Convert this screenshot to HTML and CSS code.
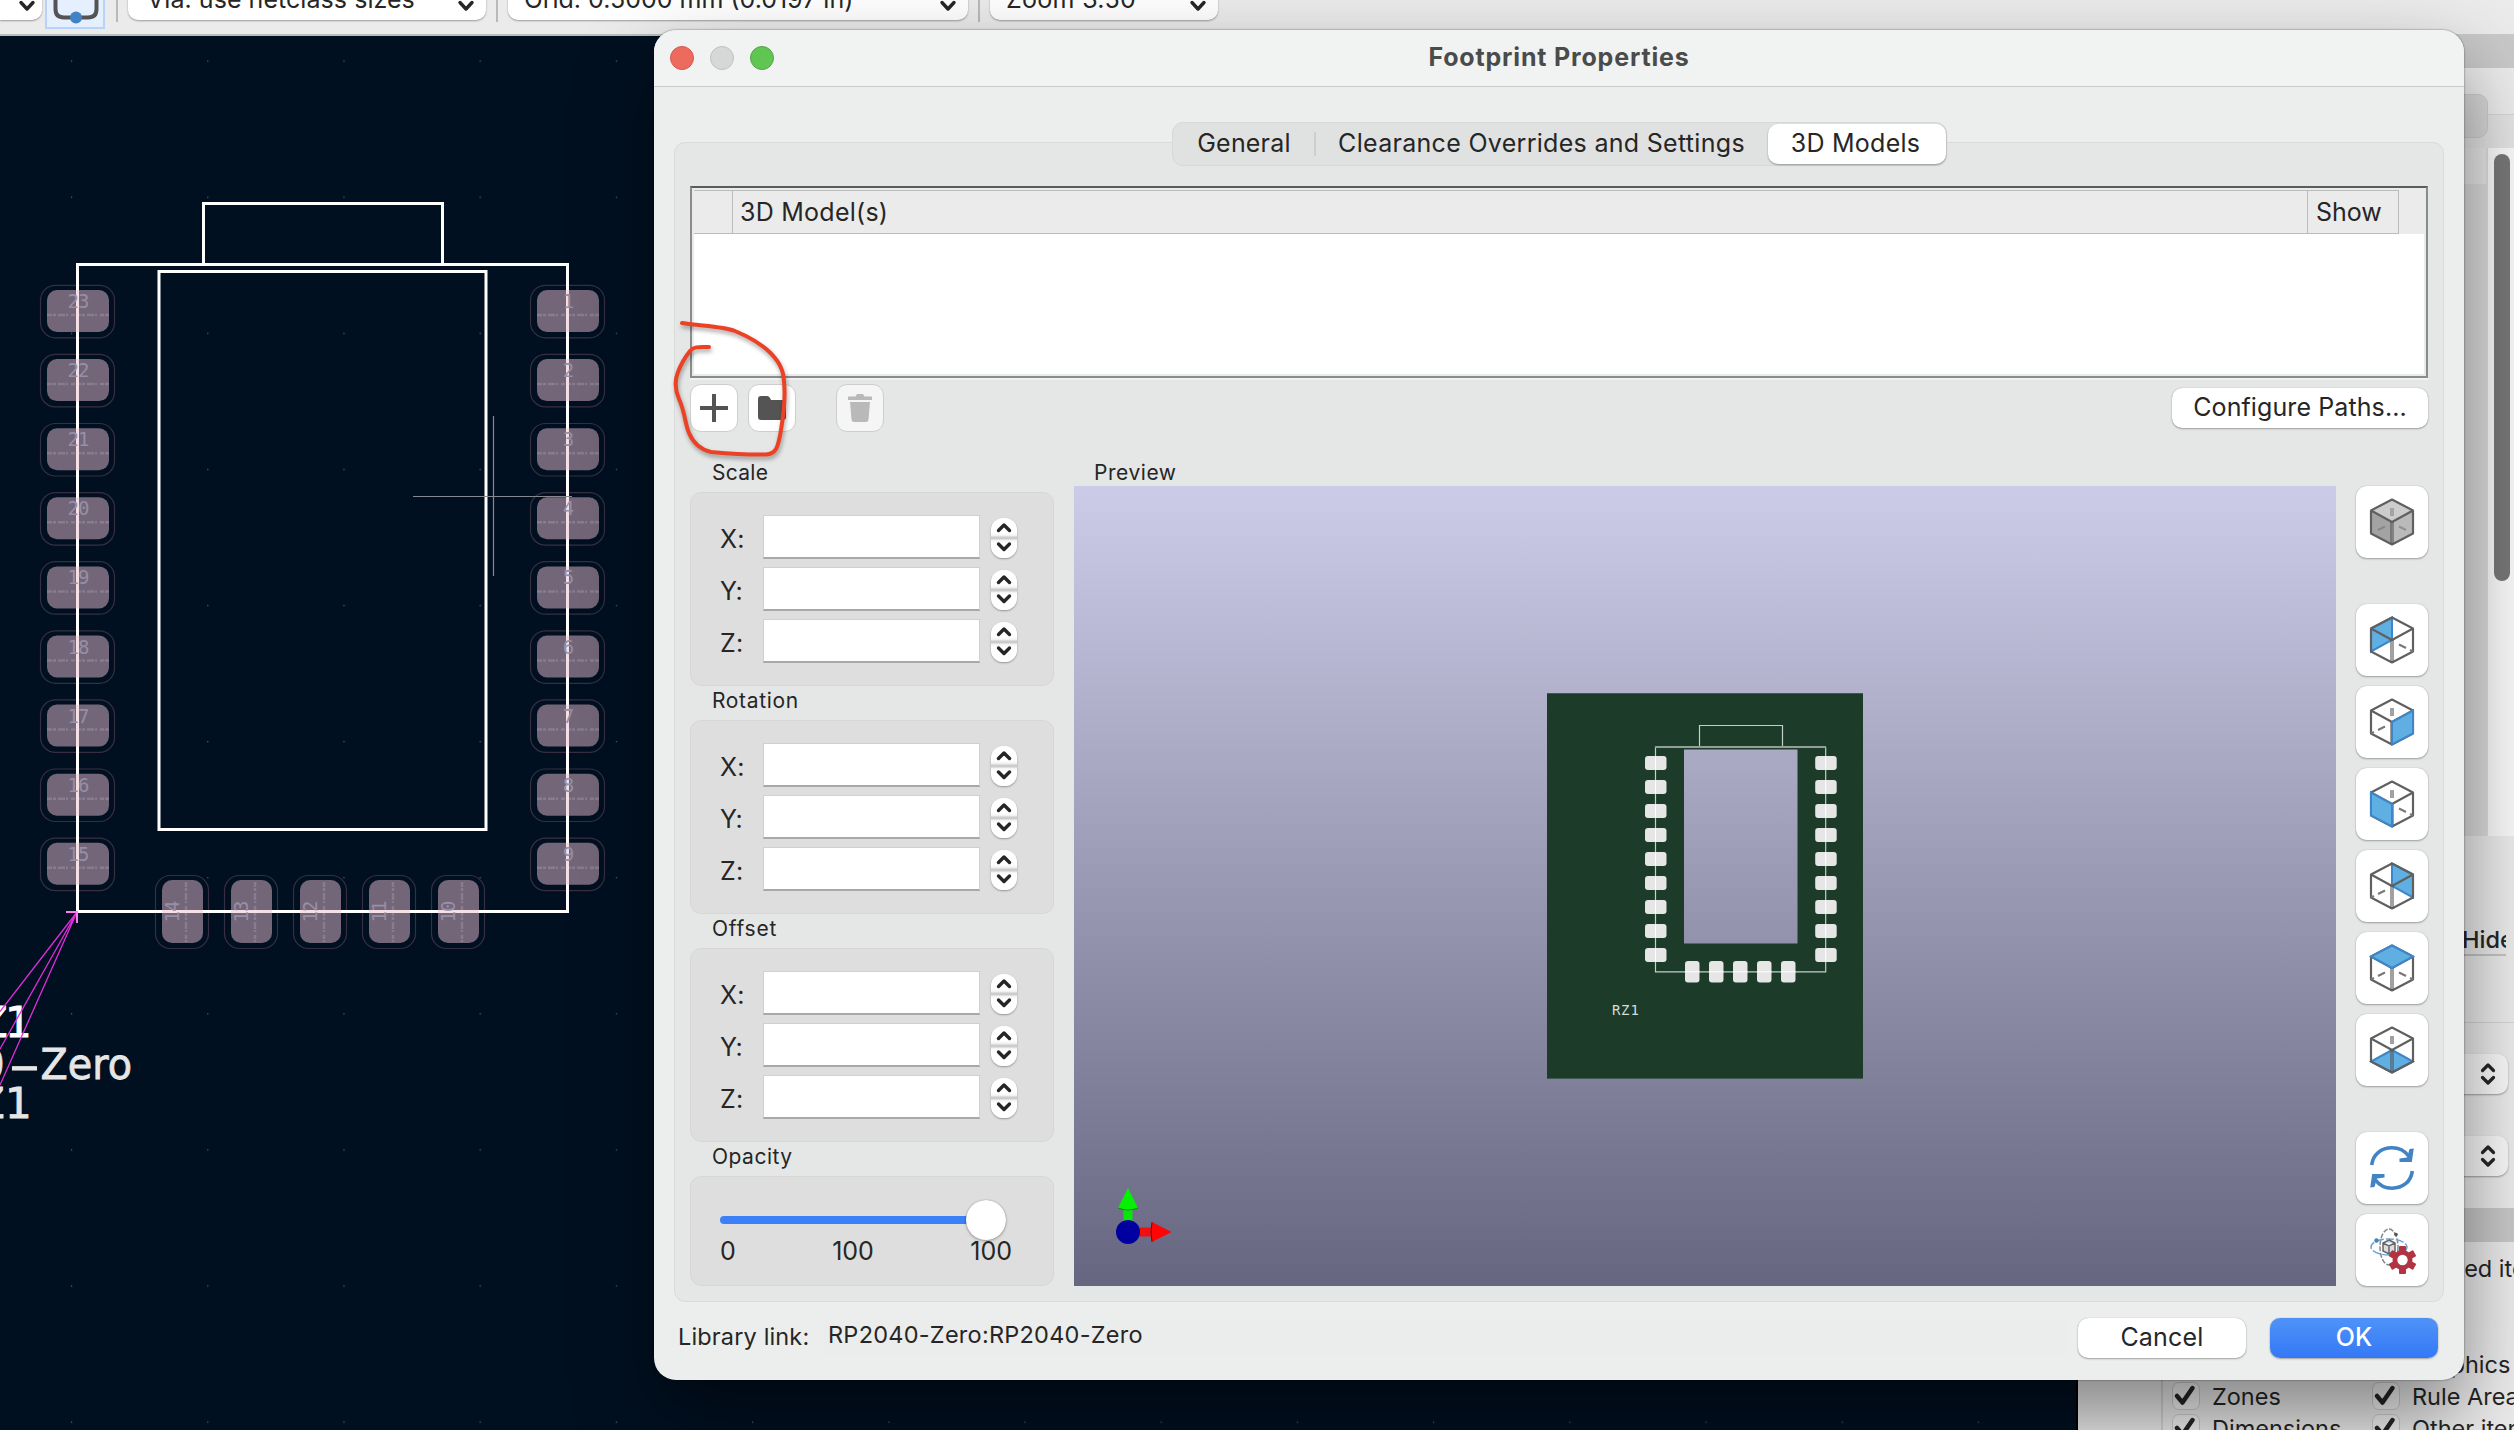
FILE: index.html
```html
<!DOCTYPE html>
<html lang="en">
<head>
<meta charset="utf-8">
<title>Footprint Properties</title>
<link rel="stylesheet" href="styles.css">
</head>
<body>
<svg class="defs" aria-hidden="true">
  <symbol id="chev" viewBox="0 0 18 12"><path d="M3 2.5 9 9 15 2.5"/></symbol>
  <symbol id="check" viewBox="0 0 28 28"><path d="M6 15 11.500 21.500 21.500 7"/></symbol>
  <symbol id="step" viewBox="0 0 26 40"><path d="M7.500 13.500 13 8 18.500 13.500M7.500 27 13 32.500 18.500 27"/></symbol>
  <symbol id="updown" viewBox="0 0 18 24"><path d="M3.500 8.500 9 3 14.500 8.500M3.500 15.500 9 21 14.500 15.500"/></symbol>
  <symbol id="wire" viewBox="0 0 48 48"><path class="edge" d="M24 1.500 45 12.500V35.500L24 46.500 3 35.500V12.500ZM3 12.500 24 24 45 12.500"/><path class="mid" d="M24 24V46"/></symbol>
  <symbol id="hid-t" viewBox="0 0 48 48"><path class="mid" d="M24 10V18"/></symbol>
  <symbol id="hid-l" viewBox="0 0 48 48"><path class="hid" d="M3 35.500 6 34M10 32 17 28.500"/></symbol>
  <symbol id="hid-r" viewBox="0 0 48 48"><path class="hid" d="M45 35.500 42 34M38 32 31 28.500"/></symbol>
</svg>

<div class="screen">
  <header class="toolbar">
    <div class="combo c0"><svg class="chev"><use href="#chev"/></svg></div>
    <div class="tool"><svg width="60" height="28" viewBox="0 0 60 28"><path d="M10.500-4V9Q10.500 17.500 19 17.500H43Q51.500 17.500 51.500 9V-4" fill="none" stroke="#545454" stroke-width="4"/><circle cx="31" cy="17.500" r="6" fill="#4183c4"/></svg></div>
    <i class="sep s1"></i>
    <div class="combo c1"><span class="t-via">Via: use netclass sizes</span><svg class="chev"><use href="#chev"/></svg></div>
    <i class="sep"></i>
    <div class="combo c2"><span class="t-grid">Grid: 0.5000 mm (0.0197 in)</span><svg class="chev"><use href="#chev"/></svg></div>
    <i class="sep"></i>
    <div class="combo c3"><span class="t-zoom">Zoom 3.50</span><svg class="chev"><use href="#chev"/></svg></div>
  </header>

  <main class="work">
    <svg class="canvas" id="canvas" viewBox="0 36 2076 1394" width="2076" height="1394">
      <defs>
        <pattern id="grid" x="71" y="60.500" width="136.200" height="136.100" patternUnits="userSpaceOnUse"><rect width="1.200" height="1.200" fill="#5b6672"/></pattern>
      </defs>
      <rect y="36" width="2076" height="1394" fill="#001021"/>
      <rect y="36" width="2076" height="1394" fill="url(#grid)"/>
      <g id="pads"></g>
      <g fill="none" stroke="#fff" stroke-width="3">
        <path d="M203.500 264V203.500H442.500V264"/>
        <rect x="77.500" y="264.500" width="490" height="647"/>
        <rect x="159" y="271.500" width="327" height="558"/>
      </g>
      <g id="tint" stroke="#f5e0e8" stroke-width="3"></g>
      <g stroke="#85898f" stroke-width="1.200"><path d="M493.500 416V576M413 496.500H572"/></g>
      <g class="kitext" stroke-width=".8">
        <text fill="#fff" stroke="#fff" y="1037" x="-21 5">Z1</text>
        <g fill="#e6e6e6" stroke="#e6e6e6">
          <text y="1078.500" x="-22">0</text>
          <text y="1080" x="8.500" textLength="32" lengthAdjust="spacingAndGlyphs">-</text>
          <text y="1078.500" x="40.500" textLength="91.500" lengthAdjust="spacingAndGlyphs">Zero</text>
          <text y="1118" x="-24 5">Z1</text>
        </g>
      </g>
      <g stroke="#e32bdc" stroke-width="1.300" fill="none"><path d="M77 912 0 1011.500M77 912 0 1049M77 912 0 1085"/><path stroke="#ff7df2" stroke-width="2" d="M66 912H77V923"/></g>
    </svg>

    <aside class="props">
      <div class="p-band"></div>
      <div class="p-tabs"><div class="p-pill"></div></div>
      <div class="p-list"><div class="p-head"></div><div class="p-track"><div class="p-thumb"></div></div></div>
      <div class="p-hide"><span>Hide</span></div>
      <div class="p-sel"><div class="p-drop"><svg><use href="#updown"/></svg></div><div class="p-drop"><svg><use href="#updown"/></svg></div></div>
      <div class="p-band2"></div>
      <div class="p-filter">
        <div class="p-row r1"><span></span><span class="f">Locked items</span></div>
        <div class="p-row r2"><span></span><span class="f">Graphics</span></div>
        <div class="p-row"><b class="cb"><svg><use href="#check"/></svg></b><span class="f">Zones</span><b class="cb"><svg><use href="#check"/></svg></b><span class="f">Rule Areas</span></div>
        <div class="p-row"><b class="cb"><svg><use href="#check"/></svg></b><span class="f">Dimensions</span><b class="cb"><svg><use href="#check"/></svg></b><span class="f">Other items</span></div>
      </div>
    </aside>
  </main>

  <section class="dialog">
    <div class="titlebar">
      <div class="lights"><i class="red"></i><i class="off"></i><i class="green"></i></div>
      <h1 class="t-title">Footprint Properties</h1>
    </div>
    <div class="body">
      <nav class="tabs"><span class="tab"><em class="t-gen">General</em></span><i></i><span class="tab wide"><em class="t-clr">Clearance Overrides and Settings</em></span><span class="tab on"><em class="t-3d">3D Models</em></span></nav>
      <div class="panel">
        <div class="table">
          <div class="thead"><span class="th th0"></span><span class="th th1"><em class="t-mod">3D Model(s)</em></span><span class="th th2"><em class="t-show">Show</em></span></div>
        </div>
        <div class="actions">
          <button class="ib"><svg width="30" height="30" viewBox="0 0 30 30"><path d="M15 1V29M1 15H29" stroke="#545454" stroke-width="4"/></svg></button>
          <button class="ib"><svg width="30" height="30" viewBox="0 0 30 30"><path d="M1 6Q1 3 4 3H10Q12 3 13 5L14 7H26Q29 7 29 10V24Q29 27 26 27H4Q1 27 1 24Z" fill="#545454"/></svg></button>
          <button class="ib dis"><svg width="30" height="30" viewBox="0 0 30 30"><path d="M3 3.500H10.500L12 1H18L19.500 3.500H27V7H3ZM5 9H25L23.500 26.500Q23.300 29 21 29H9Q6.700 29 6.500 26.500Z" fill="#b9b9b9"/></svg></button>
          <button class="btn conf"><em class="t-conf">Configure Paths...</em></button>
        </div>
        <div class="cols">
          <div class="left" id="left">
            <div class="glabel t-scale">Scale</div>
            <div class="group">
              <div class="row"><label>X:</label><div class="field"></div><div class="step"><svg><use href="#step"/></svg></div></div>
              <div class="row"><label>Y:</label><div class="field"></div><div class="step"><svg><use href="#step"/></svg></div></div>
              <div class="row"><label>Z:</label><div class="field"></div><div class="step"><svg><use href="#step"/></svg></div></div>
            </div>
            <div class="glabel t-rot">Rotation</div>
            <div class="group">
              <div class="row"><label>X:</label><div class="field"></div><div class="step"><svg><use href="#step"/></svg></div></div>
              <div class="row"><label>Y:</label><div class="field"></div><div class="step"><svg><use href="#step"/></svg></div></div>
              <div class="row"><label>Z:</label><div class="field"></div><div class="step"><svg><use href="#step"/></svg></div></div>
            </div>
            <div class="glabel t-off">Offset</div>
            <div class="group">
              <div class="row"><label>X:</label><div class="field"></div><div class="step"><svg><use href="#step"/></svg></div></div>
              <div class="row"><label>Y:</label><div class="field"></div><div class="step"><svg><use href="#step"/></svg></div></div>
              <div class="row"><label>Z:</label><div class="field"></div><div class="step"><svg><use href="#step"/></svg></div></div>
            </div>
            <div class="glabel t-opa">Opacity</div>
            <div class="group opacity">
              <div class="slider"><div class="bar"></div><div class="knob"></div></div>
              <div class="ticks"><span>0</span><span>100</span><span>100</span></div>
            </div>
          </div>
          <div class="mid-col">
            <div class="plabel t-prev">Preview</div>
            <svg class="preview" viewBox="1074 486 1262 800" width="1262" height="800">
              <path fill="#1c3b29" fill-rule="evenodd" d="M1547 693H1863V1079H1547ZM1684 749.500V943.500H1797.500V749.500Z"/>
              <path d="M1547 693.500H1863M1547 1078.500H1863" stroke="#3d5a52" fill="none"/>
              <g fill="none" stroke="#c3cfc7" stroke-width="1.200"><path d="M1699.500 747V725.500H1782.500V747M1655.500 747V971.800H1825.700V747"/></g>
              <path d="M1655 747H1826" stroke="#90a096" stroke-width="2"/>
              <g id="pv" fill="#e6e6e6"></g>
              <text class="rz" x="1612 1621 1630.500" y="1015">RZ1</text>
              <rect x="1123.500" y="1206" width="9" height="18" fill="#0ae60a"/><path d="M1128 1188 1138 1208Q1128 1212 1118 1208Z" fill="#06f006"/><path d="M1118 1208Q1128 1212 1138 1208" fill="none" stroke="#068a06"/>
              <rect x="1136" y="1227.500" width="17" height="9" fill="#f01010"/><path d="M1171.500 1232 1152 1222Q1150 1232 1152 1242Z" fill="#ff0505"/><path d="M1152 1222Q1150 1232 1152 1242" fill="none" stroke="#800"/>
              <circle cx="1128" cy="1232" r="12" fill="#0000a0"/>
            </svg>
          </div>
          <div class="views">
            <button class="vb first"><svg width="48" height="48"><path d="M24 1.500 45 12.500 24 24 3 12.500Z" fill="#ccc"/><path d="M3 12.500 24 24V46.500L3 35.500Z" fill="#a3a3a3"/><path d="M45 12.500 24 24V46.500L45 35.500Z" fill="#bababa"/><use href="#wire"/><g opacity=".6"><use href="#hid-t"/><path class="hid" d="M10 32 17 28.500M38 32 31 28.500"/></g></svg></button>
            <button class="vb"><svg width="48" height="48"><path class="blue" d="M3 12.500 24 1.500V24L3 35.500Z"/><use href="#wire"/><use href="#hid-r"/></svg></button>
            <button class="vb"><svg width="48" height="48"><use href="#wire"/><use href="#hid-t"/><use href="#hid-l"/><path class="blue" d="M24 24 45 12.500V35.500L24 46.500Z"/></svg></button>
            <button class="vb"><svg width="48" height="48"><use href="#wire"/><use href="#hid-t"/><use href="#hid-r"/><path class="blue" d="M24 24 3 12.500V35.500L24 46.500Z"/></svg></button>
            <button class="vb"><svg width="48" height="48"><path class="blue" d="M45 12.500 24 1.500V24L45 35.500Z"/><use href="#wire"/><use href="#hid-l"/></svg></button>
            <button class="vb"><svg width="48" height="48"><use href="#wire"/><use href="#hid-l"/><use href="#hid-r"/><path class="blue" d="M24 1.500 45 12.500 24 24 3 12.500Z"/></svg></button>
            <button class="vb last"><svg width="48" height="48"><path class="blue" d="M24 24 45 35.500 24 46.500 3 35.500Z"/><use href="#wire"/><use href="#hid-t"/></svg></button>
            <button class="vb"><svg width="44" height="44" viewBox="0 0 44 44"><g id="arc"><path d="M1.700 19C3 8 11.500 1.800 22 1.800C29 1.800 34.500 4.500 38.500 10" fill="none" stroke="#4183c4" stroke-width="3.600"/><path d="M43.800 2.500 41.800 16H29.500V12.500L37 11.500 39.500 3Z" fill="#4183c4"/></g><use href="#arc" transform="rotate(180 22 22)"/></svg></button>
            <button class="vb"><svg width="48" height="48" viewBox="0 0 48 48"><ellipse cx="21" cy="21" rx="9" ry="18" fill="none" stroke="#888" stroke-width="1.500" stroke-dasharray="5 1.500"/><ellipse cx="21" cy="21" rx="18" ry="8" fill="none" stroke="#69a5d8" stroke-width="1.500" stroke-dasharray="8 2"/><path d="M21 14 27 17V25L21 28 15 25V17ZM15 17 21 20 27 17M21 20V28" fill="#ddd" stroke="#666" stroke-width="1.500"/><circle cx="8.500" cy="14.500" r="2.200" fill="#4183c4"/><circle cx="28" cy="8.500" r="1.800" fill="#545454"/><g fill="#b23342"><circle cx="34.500" cy="34" r="10"/><g id="tooth"><rect x="31" y="20" width="7" height="28" rx="1"/></g><use href="#tooth" transform="rotate(60 34.500 34)"/><use href="#tooth" transform="rotate(120 34.500 34)"/></g><circle cx="34.500" cy="34" r="5.200" fill="#fff"/></svg></button>
          </div>
        </div>
      </div>
      <footer class="foot"><span class="t-lib">Library link:</span><div class="link"><span class="t-link">RP2040-Zero:RP2040-Zero</span></div><button class="btn dlg"><em class="t-can">Cancel</em></button><button class="btn dlg ok"><em class="t-ok">OK</em></button></footer>
    </div>
  </section>

  <svg class="mark" width="124" height="146" viewBox="668 316 124 146"><path d="M682 323C700 326 722 326 735 331C752 338 766 347 775 358C784 369 784 378 784.500 390C785 405 783 418 781 430C778 448 776 454 766 454.500C748 455 728 453.500 711 452C698 449 692 440 689 433C685 424 685 412 679 399C675 390 674 382 678 372C681 364 686 356 690 351C694 346 700 347 709 347"/></svg>
</div>
<script src="board.js"></script>
</body>
</html>
```
FILE: board.js
```js
// Builds the repeated pads of the footprint on the board canvas and in the 3D preview.
const pads = [], tint = [], pv = [];
const dash = '5 1 3 2 7 1 2 3 4 1';

function sidePad(x, y, label) {
  pads.push(`<rect x="${x - 6.5}" y="${y - 4.7}" width="74" height="52.500" rx="15" fill="none" stroke="#372f41" stroke-width="1.200"/>
    <rect x="${x}" y="${y}" width="62" height="42" rx="10" fill="#736678"/>
    <path d="M${x} ${y + 25}H${x + 62}" stroke="#877c90" stroke-width="2.500" stroke-dasharray="${dash}"/>`);
  tint.push(`<path d="M${x + 30.5} ${y}V${y + 42}"/><text class="num" x="${x + 31}" y="${y + 18}">${label}</text>`);
}

for (let i = 0; i < 9; i++) {
  const y = 290 + i * 69.1;
  sidePad(47, y, 23 - i);
  sidePad(537, y, i + 1);
  for (const x of [1645, 1815.2]) {
    pv.push(`<rect x="${x}" y="${756 + i * 24}" width="21.500" height="14" rx="3"/><path d="M${x + 10.5} ${756 + i * 24}v14" stroke="#fff"/>`);
  }
}

for (let i = 0; i < 5; i++) {
  const x = 162 + i * 69;
  pads.push(`<rect x="${x - 6.500}" y="875.500" width="53" height="73" rx="15" fill="none" stroke="#372f41" stroke-width="1.200"/>
    <rect x="${x}" y="880" width="41" height="63" rx="10" fill="#736678"/>
    <path d="M${x + 24} 882V942" stroke="#877c90" stroke-width="2.500" stroke-dasharray="${dash}"/>`);
  tint.push(`<path d="M${x} 911.500H${x + 41}"/><text class="num" transform="translate(${x + 17} 912) rotate(-90)">${14 - i}</text>`);
  pv.push(`<rect x="${1685 + i * 24}" y="961" width="14.500" height="21.500" rx="3"/><path d="M${1685 + i * 24} 971.800h14.500" stroke="#fff"/>`);
}

document.getElementById('pads').innerHTML = pads.join('');
document.getElementById('tint').innerHTML = tint.join('');
document.getElementById('pv').innerHTML = pv.join('');
```
FILE: styles.css
```css
* { box-sizing: border-box; }
body { margin: 0; font-family: Inter, "Liberation Sans", sans-serif; font-size: 25px; color: #262626; overflow: hidden; }
em { font-style: normal; white-space: nowrap; }
.defs { display: block; width: 0; height: 0; position: absolute; }
.screen { width: 2514px; height: 1430px; overflow: hidden; position: relative; background: #001021; }

/* Main window toolbar */
.toolbar { height: 36px; background: #ebebeb; border-bottom: 2px solid #bcbebd; display: flex; align-items: flex-start; overflow: hidden; }
.combo { height: 40px; margin-top: -20px; background: #fff; border-radius: 10px; box-shadow: 0 1px 2px rgba(0,0,0,.35); display: flex; align-items: center; justify-content: space-between; padding: 0 11px 0 18px; line-height: 40px; white-space: nowrap; }
.chev { width: 18px; height: 12px; flex: none; margin-top: 12px; fill: none; stroke: #262626; stroke-width: 3.400; stroke-linecap: round; stroke-linejoin: round; }
.combo span { height: 40px; line-height: 38px; }
.c0 { width: 42px; border-radius: 0 10px 10px 0; }
.c1 { width: 358px; padding-left: 19px; }
.c2 { width: 460px; padding-left: 16px; }
.c3 { width: 228px; padding-left: 16px; }
.tool { width: 60px; height: 29px; margin-left: 3px; background: #e5effd; border: 2px solid #b7d3f8; border-top: 0; overflow: hidden; }
.tool svg { display: block; margin-left: -2px; }
.sep { width: 2px; height: 22px; margin: 0 10px 0 10px; background: #b9b9b9; }
.s1 { margin-left: 11px; }

/* Tracking per label */
.t-via { letter-spacing: .05px; }
.t-zoom { letter-spacing: .3px; }
.t-title { letter-spacing: .83px; }
.t-gen { letter-spacing: .2px; }
.t-clr { letter-spacing: .3px; }
.t-3d { letter-spacing: .25px; }
.t-mod { letter-spacing: .25px; }
.t-conf { letter-spacing: .1px; }
.t-scale { letter-spacing: .3px; }
.t-rot { letter-spacing: .65px; }
.t-off { letter-spacing: .75px; }
.t-opa { letter-spacing: .5px; }
.t-prev { letter-spacing: .55px; }
.t-lib { letter-spacing: .15px; }
.t-link { letter-spacing: .25px; }
.t-can { letter-spacing: .2px; }

.work { display: flex; }
.canvas { display: block; flex: none; }
.num { font: 19px "DejaVu Sans Mono", monospace; fill: #978fa6; stroke: none; text-anchor: middle; letter-spacing: -1px; }
.kitext { font: 42px "DejaVu Sans", sans-serif; }
.rz { font: 14px "DejaVu Sans Mono", monospace; fill: #d5ddd8; }

/* Docked panel on the right */
.props { width: 438px; height: 1396px; margin-top: -2px; background: #ececec; border-left: 2px solid #000; overflow: hidden; display: flex; flex-direction: column; font-size: 23.500px; }
.p-band { height: 34px; flex: none; background: #c9c9c9; }
.p-tabs { height: 80px; flex: none; padding-top: 26px; background: linear-gradient(#ececec 46px, #d6d6d6 46px, #d6d6d6 47px, #e4e4e4 47px); }
.p-pill { width: 410px; height: 44px; background: #d8d8d8; border: 1px solid #cdcdcd; border-radius: 10px; }
.p-list { height: 688px; flex: none; display: flex; justify-content: flex-end; background: #ddd; }
.p-head { width: 408px; height: 36px; background: #e8e8e8; border-right: 2px solid #ddd; }
.p-track { width: 26px; background: #fafafa; padding: 6px; }
.p-thumb { width: 16px; height: 427px; border-radius: 8px; background: #777; }
.p-hide { height: 186px; flex: none; margin-right: 8px; padding: 90px 0 0 384px; }
.p-hide span { display: block; height: 30px; line-height: 28px; border-bottom: 2px solid #c4c4c4; overflow: hidden; font-size: 23.500px; font-weight: 500; }
.p-sel { height: 186px; flex: none; border-top: 1px solid #d5d5d5; padding: 31px 6px 0 200px; display: flex; flex-direction: column; gap: 42px; }
.p-drop { height: 40px; border-radius: 10px; background: #fafafa; box-shadow: 0 1px 2px rgba(0,0,0,.35); display: flex; align-items: center; justify-content: flex-end; padding-right: 11px; }
.p-drop svg { width: 18px; height: 24px; fill: none; stroke: #262626; stroke-width: 3.200; stroke-linecap: round; stroke-linejoin: round; }
.p-band2 { height: 34px; flex: none; background: #c9c9c9; }
.p-filter { flex: 1; margin-left: 83px; border-left: 2px solid #d4d4d4; padding: 10px 0 0 9px; }
.p-row { height: 32px; display: grid; grid-template-columns: 28px 148px 28px 160px; column-gap: 12px; align-items: center; white-space: nowrap; }
.r1, .r2 { grid-template-columns: 188px 240px; column-gap: 51px; }
.r1 { margin-bottom: 64px; }
.cb { width: 28px; height: 28px; border: 1.500px solid #cfcfcf; border-radius: 7px; background: #f4f4f4; }
.cb svg { display: block; width: 28px; height: 28px; margin: -2px; fill: none; stroke: #262626; stroke-width: 4.500; stroke-linecap: round; stroke-linejoin: round; }

/* Dialog window over the editor */
.dialog { position: absolute; left: 654px; top: 30px; width: 1810px; height: 1350px; border-radius: 22px; background: #eceeed; box-shadow: 0 0 2px rgba(0,0,0,.6), 0 36px 80px rgba(0,0,0,.45); display: flex; flex-direction: column; }
.titlebar { height: 57px; flex: none; background: #f1f3f2; border-bottom: 1px solid #c9cbca; border-radius: 22px 22px 0 0; display: grid; grid-template-columns: 200px 1fr 200px; }
.lights { display: flex; gap: 16px; padding: 16px 0 0 16px; }
.lights i { width: 24px; height: 24px; border-radius: 50%; border: 1px solid; }
.lights .red { background: #ed6a5f; border-color: #d8574c; }
.lights .off { background: #d6d8d7; border-color: #c0c2c1; }
.lights .green { background: #61c554; border-color: #50a743; }
h1 { margin: 0; font-size: 25px; line-height: 54px; font-weight: 700; color: #4a4b4b; text-align: center; }
.body { padding: 35px 20px 0; display: flex; flex-direction: column; }
.tabs { width: 775px; height: 44px; margin: 0 auto -24px; z-index: 1; border: 1px solid #d6d8d7; border-radius: 11px; background: #e0e2e1; display: flex; align-items: center; line-height: 39px; }
.tabs i { width: 2px; height: 24px; background: #cdcfce; }
.tab { width: 141px; height: 40px; padding-left: 2px; text-align: center; }
.tab.wide { width: 452px; padding: 0; }
.tab.on { width: 178px; padding-right: 2px; padding-left: 0; background: #fff; border-radius: 10px; box-shadow: 0 1px 2px rgba(0,0,0,.35); }
.panel { height: 1160px; border: 1px solid #dadcdb; border-radius: 11px; background: #e5e7e6; padding: 43px 15px 0; }
.table { height: 192px; border: 2px solid #8a8c8b; border-top-color: #5c5c5c; background: #fff; box-shadow: inset 0 0 0 2px #e9ebea, 0 2px 0 #f0f2f1; padding: 2px; }
.thead { height: 44px; background: #ebebeb; display: flex; padding-right: 25px; line-height: 43px; }
.th { border: 1px solid #bcbcbc; border-width: 1px 1.500px 1px 0; }
.th0 { width: 39px; }
.th1 { flex: 1; padding-left: 7px; }
.th2 { width: 91px; padding-left: 8px; }
.actions { margin-top: 6px; height: 48px; display: flex; align-items: center; }
button { font: inherit; color: inherit; padding: 0; border: 0; display: flex; align-items: center; justify-content: center; flex: none; }
.ib { width: 48px; height: 48px; margin-right: 10px; background: #fff; border: 1.500px solid #cdcfce; border-radius: 11px; }
.ib.dis { margin-left: 30px; background: #f4f5f4; }
.btn { height: 40px; border-radius: 10px; background: #fff; box-shadow: 0 0 1px rgba(0,0,0,.3), 0 1px 2px rgba(0,0,0,.3); line-height: 40px; }
.btn em { height: 40px; line-height: 38px; }
.conf { width: 256px; margin-left: auto; }
.cols { display: flex; gap: 20px; margin-top: 26px; }
.left { width: 364px; }
.glabel { height: 34px; line-height: 29px; padding-left: 22px; font-size: 21px; }
.group { height: 194px; border: 1px solid #d6d8d7; border-radius: 11px; background: #dedede; padding: 22px 0 0 29px; display: flex; flex-direction: column; gap: 8px; }
.row { height: 44px; display: flex; align-items: flex-start; }
.row label { width: 43px; line-height: 48px; letter-spacing: .2px; }
.field { width: 217px; height: 44px; background: #fff; border: 1px solid #d0d0d0; border-bottom: 2px solid #a8a8a8; }
.step { width: 26px; height: 40px; margin: 3px 0 0 11px; border-radius: 12px; background: linear-gradient(#fff 15px, #eee 18px, #ccc 19px, #ccc 21px, #f2f2f2 22px, #fff 25px); box-shadow: 0 1px 2px rgba(0,0,0,.35); }
.step svg { display: block; width: 26px; height: 40px; margin-top: -1px; fill: none; stroke: #262626; stroke-width: 3.400; stroke-linecap: round; stroke-linejoin: round; }
.opacity { height: 110px; padding-top: 23px; gap: 0; }
.slider { height: 40px; width: 286px; display: flex; align-items: center; }
.bar { width: 252px; height: 8px; border-radius: 4px; background: #3b80f7; margin-right: -6px; }
.knob { width: 40px; height: 40px; border-radius: 50%; background: #fff; box-shadow: 0 0 1px rgba(0,0,0,.4), 0 1px 3px rgba(0,0,0,.3); }
.ticks { display: flex; justify-content: space-between; width: 292px; line-height: 22px; }
.mid-col { width: 1262px; }
.plabel { height: 28px; line-height: 29px; padding-left: 20px; font-size: 21px; }
.preview { display: block; background: linear-gradient(#cccce8, #666680); }
.views { padding-top: 28px; display: flex; flex-direction: column; gap: 10px; }
.vb { width: 72px; height: 72px; border-radius: 11px; background: #fff; box-shadow: 0 0 1px rgba(0,0,0,.3), 0 1px 2px rgba(0,0,0,.3); }
.vb.first, .vb.last { margin-bottom: 36px; }
.edge { fill: none; stroke: #606060; stroke-width: 2.200; stroke-linejoin: round; }
.mid { fill: none; stroke: #545454; stroke-opacity: .55; stroke-width: 4; }
.hid { fill: none; stroke: #777; stroke-width: 2; }
.blue { fill: #5fafe3; stroke: #3f86c8; stroke-width: 2; }
.foot { display: flex; padding: 16px 6px 0 4px; align-items: flex-start; font-size: 23.500px; }
.foot > span { line-height: 37px; white-space: nowrap; width: 146px; }
.link { width: 1244px; height: 34px; margin: 2px 0 0; padding-left: 4px; background: #ebecec; line-height: 30px; }
.btn.dlg { width: 168px; margin-left: 10px; font-size: 25px; }
.btn.dlg.ok { margin-left: 24px; color: #fff; font-weight: 500; background: linear-gradient(#4f93f8, #3478f6); }

/* Hand-drawn annotation over the window */
.mark { position: absolute; left: 668px; top: 316px; fill: none; stroke: #ec4125; stroke-width: 4; stroke-linecap: round; filter: drop-shadow(1px 3px 2px rgba(0,0,0,.35)); }
```
